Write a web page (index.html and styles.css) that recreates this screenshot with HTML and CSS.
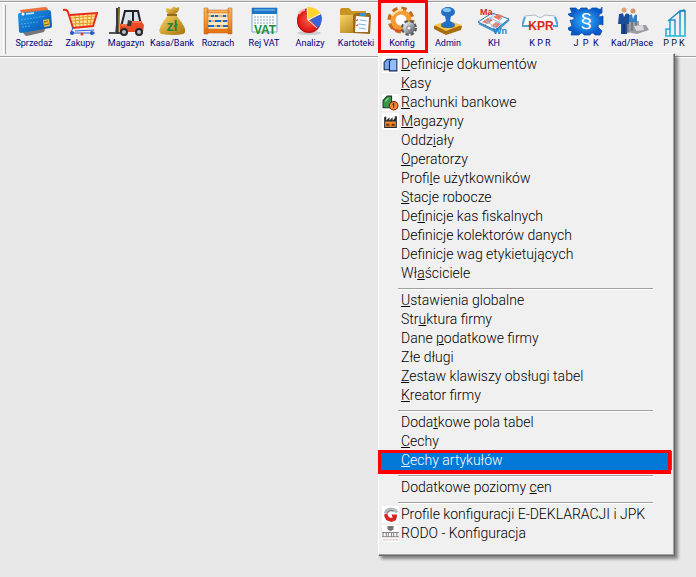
FILE: index.html
```html
<!DOCTYPE html>
<html lang="pl">
<head>
<meta charset="utf-8">
<title>Konfiguracja</title>
<link rel="stylesheet" href="styles.css">
</head>
<body>
<svg class="defs" aria-hidden="true">
  <defs>
    <linearGradient id="blue" x1="0" y1="0" x2="1" y2="1"><stop offset="0" stop-color="#1a9af0"/><stop offset="1" stop-color="#0a50a8"/></linearGradient>
    <linearGradient id="gold" x1="0" y1="0" x2="1" y2="1"><stop offset="0" stop-color="#f7d768"/><stop offset="1" stop-color="#a87008"/></linearGradient>
    <linearGradient id="orange" x1="0" y1="0" x2="0" y2="1"><stop offset="0" stop-color="#ffb95c"/><stop offset="1" stop-color="#e8700c"/></linearGradient>
    <linearGradient id="steel" x1="0" y1="0" x2="1" y2="1"><stop offset="0" stop-color="#e4e8ea"/><stop offset="1" stop-color="#626a70"/></linearGradient>
    <linearGradient id="cyan" x1="0" y1="0" x2="0" y2="1"><stop offset="0" stop-color="#1c7fc0"/><stop offset="1" stop-color="#22b5d8"/></linearGradient>
    <radialGradient id="red"><stop offset="0" stop-color="#ff6048"/><stop offset="1" stop-color="#d81010"/></radialGradient>
    <radialGradient id="jpk"><stop offset="0" stop-color="#39b4ff"/><stop offset="1" stop-color="#0758c8"/></radialGradient>
  </defs>
</svg>

<header class="toolbar">
  <span class="grip"></span>
  <nav class="tools" aria-label="Moduły">
    <button class="tool"><svg class="icon" viewBox="0 0 36 32">
      <path d="M4 4 29 1q2 0 3 2l3 12-26 5z" fill="#e8713a"/>
      <path d="M5 24 31 18 28 26 11 30q-2 0-3-2z" fill="#77777b"/>
      <path d="M2 9q0-2 2-2L32 4q3 0 3 2l1 14q0 2-2 2L5 27q-2 0-2-2z" fill="url(#blue)"/>
      <path d="M5 14 29 10M5 18 22 16M6 21 14 20" stroke="#70c7f5" fill="none" stroke-dasharray="2 1" stroke-width=".6"/>
      <circle cx="7" cy="8" r="1.5" fill="#fff"/><path d="M10 8 18 7" stroke="#c8ecff" stroke-width="1.5"/>
      <path d="m27 14 6-1 1 7-6 1z" fill="#e6bd36"/><path d="m28 16 4-1M28 19l5-1" stroke="#75662a"/>
    </svg><span class="caption">Sprzedaż</span></button>

    <button class="tool"><svg class="icon" viewBox="0 0 36 32">
      <path d="m8 9 26-2-4 13-20 1z" fill="#ffe39a"/>
      <path d="M9 12 33 10M10 15 32 13M10 18 31 17M13 9l1 12M17 9l1 12M21 8v12M26 8l-1 12M30 8l-2 12" stroke="#e49a20" fill="none"/>
      <path d="M1 4q4-1 5 2l5 16 20-2 4-13L8 9" stroke="#e82c16" stroke-width="2" fill="none"/>
      <path d="m11 21-2 6h24M13 25l19-1" stroke="#2c5ed8" fill="none"/>
      <circle cx="10" cy="27" r="2" fill="#2654cb"/><circle cx="20" cy="28" r="1.5" fill="#e53522"/><circle cx="30" cy="27" r="2" fill="#2654cb"/>
    </svg><span class="caption">Zakupy</span></button>

    <button class="tool"><svg class="icon" viewBox="0 0 36 32">
      <path d="M1 27h13M11 1 8 27" stroke="#555" fill="none" stroke-width="2"/>
      <path d="M8 2h4l-1 26H8z" fill="#35383d"/><path d="M11 2v24" stroke="#d89a24"/>
      <path d="m16 5h14l3 14H13z" fill="#d9e2e8"/><path d="m17 5-4 16M16 5h14l3 14M25 6v14" stroke="#202429" stroke-width="2" fill="none"/>
      <path d="M12 18h8l3-3h10l3 4-1 7H12z" fill="#e94b27"/><path d="M13 19h7l3-3h10" stroke="#ff997a" fill="none"/>
      <path d="m20 14 4 1-1 5h-4z" fill="#353535"/>
      <circle cx="16" cy="26" r="4" fill="#25272c"/><circle cx="31" cy="26" r="4" fill="#25272c"/>
      <circle cx="16" cy="26" r="2" fill="#b9bdc2"/><circle cx="31" cy="26" r="2" fill="#b9bdc2"/>
    </svg><span class="caption">Magazyn</span></button>

    <button class="tool"><svg class="icon" viewBox="0 0 36 32">
      <path d="M14 8Q10 3 13 2l4 1q3-4 5-1l3-1q1 4-4 7Z" fill="url(#gold)"/>
      <path d="M14 9h8l6 8q6 9 1 11-8 2-22 0-4-3 2-12z" fill="url(#gold)"/>
      <path d="M13 8h10v2H13z" fill="#8f6a17"/>
      <text x="18" y="25" class="zl">zł</text>
    </svg><span class="caption">Kasa/Bank</span></button>

    <button class="tool"><svg class="icon" viewBox="0 0 36 32">
      <path d="M6 6h24v20H6z" fill="#ffe6c4"/>
      <path d="M6 10h24M6 15h24M6 20h24" stroke="#b88350"/>
      <path d="M11 10h3m1 0h3m5 0h3M9 15h2m4 0h6m2 0h4M8 20h6m3 0h3m3 0h5" stroke="#176bc0" stroke-width="2"/>
      <path d="M4 2h4v26H4zM28 2h4v26h-4zM7 4h22v3H7zM6 23h24v4H6z" fill="url(#orange)" stroke="#b95e16" stroke-width=".5"/>
    </svg><span class="caption">Rozrach</span></button>

    <button class="tool"><svg class="icon" viewBox="0 0 36 32">
      <path d="M6 2h25v24H6z" fill="#f9fcff" stroke="#7ba6d0"/><path d="M6 2h25v6H6z" fill="#1b76c8"/><path d="M8 4h21" stroke="#88c7f3"/>
      <path d="M8 11h21M8 14h21M8 17h21" stroke="#8ca0b2" stroke-dasharray="2 1"/>
      <text x="19" y="28" class="vat">VAT</text>
    </svg><span class="caption">Rej VAT</span></button>

    <button class="tool"><svg class="icon" viewBox="0 0 36 32">
      <ellipse cx="17" cy="27" rx="12" ry="2" fill="#ccc"/>
      <circle cx="17" cy="15" r="12" fill="#ae1010"/><circle cx="17" cy="14" r="12" fill="url(#red)"/>
      <path d="M16 14 15 1q9-1 14 7z" fill="#ffd52d"/><path d="m18 14 11-6q3 7-3 14z" fill="#3765db"/>
      <path d="M16 14 15 2M16 14l12-6M16 14l9 8" stroke="#fff" fill="none"/>
      <path d="M7 8q2-4 6-4" stroke="#ffaaa0" fill="none" stroke-width="2"/>
    </svg><span class="caption">Analizy</span></button>

    <button class="tool"><svg class="icon" viewBox="0 0 36 32">
      <path d="M2 4q0-2 2-2h7l3 3h14v21H2z" fill="#c89426"/><path d="M2 9h25v18H2z" fill="url(#gold)"/>
      <path d="m15 9 3-2h14l1 3-1 18-17-1z" fill="#9c6a1e"/><path d="m18 10 13 1-1 15H17z" fill="#fff"/>
      <path d="M22 7h6v3h-6z" fill="#3d91cf"/><path d="m22 14 7 1M21 18l7 1M21 22l7 1" stroke="#75b5e1"/><path d="m18 14 1 1 1-2m-2 6 1 1 1-2" stroke="#e24848" fill="none"/>
    </svg><span class="caption">Kartoteki</span></button>

    <div class="konfig">
      <button class="tool framed" aria-expanded="true"><svg class="icon" viewBox="0 0 36 32">
        <circle cx="17" cy="14" r="11" fill="none" stroke="#c36b1b" stroke-width="5" stroke-dasharray="5 3.64"/>
        <circle cx="17" cy="14" r="8" fill="#fff" stroke="#f39b35" stroke-width="5"/>
        <path d="M8 10q4-6 11-6" stroke="#ffdc9f" stroke-width="2" fill="none"/>
        <path d="M8 22q5 4 11 2" stroke="#d8501d" stroke-width="2" fill="none"/>
        <circle cx="25" cy="22" r="6" fill="none" stroke="#545c60" stroke-width="4" stroke-dasharray="3 1.7"/>
        <circle cx="25" cy="22" r="4" fill="#f5f6f6" stroke="url(#steel)" stroke-width="4"/>
        <circle cx="25" cy="22" r="2" fill="#eef" stroke="#555" stroke-width=".6"/>
      </svg><span class="caption">Konfig</span></button>

      <div class="menu" role="menu">
        <button class="entry" role="menuitem"><svg class="mark" viewBox="0 0 16 16"><path fill="#fff" d="M0 0h16v16H0z"/><path d="M2 6 5 3h4v10H2z" fill="#79a9f5" stroke="#102548"/><path d="m7 5 2-2h5v11H7z" fill="#8fbdff" stroke="#102548"/></svg><span><u>D</u>efinicje dokumentów</span></button>
        <button class="entry" role="menuitem"><span><u>K</u>asy</span></button>
        <button class="entry" role="menuitem"><svg class="mark" viewBox="0 0 16 16"><path fill="#fff" d="M0 0h16v16H0z"/><path d="m1 6 4-4h4v11H1z" fill="#37964a" stroke="#143d1d"/><path d="M3 7 6 4" stroke="#9bd6a3"/><circle cx="11" cy="11" r="4" fill="#f48b32" stroke="#6b2808"/><path d="m10 10 1-1v4" stroke="#552000" fill="none"/></svg><span><u>R</u>achunki bankowe</span></button>
        <button class="entry" role="menuitem"><svg class="mark" viewBox="0 0 16 16"><path fill="#fff" d="M0 0h16v16H0z"/><path d="M2 14V4l2-1v4l3-3v3l3-3v3l2-2V3h2v11z" fill="#292b2e"/><path d="M3 8h10v5H3z" fill="#f58b2c"/><path d="M4 10h3v2H4zm5 0h3v2H9z" fill="#6b2f11"/></svg><span><u>M</u>agazyny</span></button>
        <button class="entry" role="menuitem"><span>Oddz<u>i</u>ały</span></button>
        <button class="entry" role="menuitem"><span><u>O</u>peratorzy</span></button>
        <button class="entry" role="menuitem"><span>Profi<u>l</u>e użytkowników</span></button>
        <button class="entry" role="menuitem"><span><u>S</u>tacje robocze</span></button>
        <button class="entry" role="menuitem"><span>De<u>f</u>inicje kas fiskalnych</span></button>
        <button class="entry" role="menuitem"><span>Definicje kolektorów danych</span></button>
        <button class="entry" role="menuitem"><span>Definicje wag etykietujących</span></button>
        <button class="entry" role="menuitem"><span>Wł<u>a</u>ściciele</span></button>
        <hr class="rule">
        <button class="entry" role="menuitem"><span><u>U</u>stawienia globalne</span></button>
        <button class="entry" role="menuitem"><span>Str<u>u</u>ktura firmy</span></button>
        <button class="entry" role="menuitem"><span>Dane <u>p</u>odatkowe firmy</span></button>
        <button class="entry" role="menuitem"><span>Złe długi</span></button>
        <button class="entry" role="menuitem"><span><u>Z</u>estaw klawiszy obsługi tabel</span></button>
        <button class="entry" role="menuitem"><span><u>K</u>reator firmy</span></button>
        <hr class="rule">
        <button class="entry" role="menuitem"><span>Doda<u>t</u>kowe pola tabel</span></button>
        <button class="entry" role="menuitem"><span><u>C</u>echy</span></button>
        <button class="entry selected" role="menuitem"><span><u>C</u>echy artykułów</span></button>
        <hr class="rule">
        <button class="entry" role="menuitem"><span>Dodatkowe poziomy <u>c</u>en</span></button>
        <hr class="rule">
        <button class="entry" role="menuitem"><svg class="mark" viewBox="0 0 16 16"><path fill="#fff" d="M0 0h16v16H0z"/><path d="M14 6A6 6 0 0 0 3 7" stroke="#b5b8ba" stroke-width="3" fill="none"/><path d="M2 8q0 6 7 7 6-1 5-7H9l1 3q-4 1-5-4z" fill="#d62525"/><path d="M11 5q-4-2-6 2" stroke="#777" fill="none"/></svg><span>Profile konfiguracji E-DEKLARACJI i JPK</span></button>
        <button class="entry" role="menuitem"><svg class="mark" viewBox="0 0 16 16"><path fill="#fff" d="M0 0h16v16H0z"/><path d="M5 1h6v3l-3 2-3-2z" fill="#8b8585"/><path d="M6 2h4M6 4h4" stroke="#666"/><path d="M0 7h16M0 11h16M1 7v4M4 7v4M6 7v4M9 7v4M11 7v4M14 7v4" stroke="#8b8586" fill="none"/><path d="M1 14h14" stroke="#d0b8b8" stroke-dasharray="2 1"/></svg><span>RODO - Konfiguracja</span></button>
      </div>
    </div>

    <button class="tool"><svg class="icon" viewBox="0 0 36 32">
      <path d="m4 20 15-5 13 5-1 4-15 5-12-6z" fill="#a86c0c"/><path d="m4 19 15-4 13 4-16 6z" fill="#f4c64b"/>
      <ellipse cx="18" cy="20" rx="7" ry="2" fill="#8b5c16"/><path d="M15 10h6l-1 5 5 3q-1 4-7 4-6 0-7-4l5-3z" fill="#1f71c7"/>
      <ellipse cx="18" cy="6" rx="7" ry="5" fill="#246fc0"/><ellipse cx="17" cy="4" rx="4" ry="2" fill="#85c6f3"/>
    </svg><span class="caption">Admin</span></button>

    <button class="tool"><svg class="icon" viewBox="0 0 36 32">
      <path d="m2 18 15-9 17 5-14 13z" fill="#4995c7"/><path d="m2 16 14-9 17 6-14 11z" fill="#f3f8fc" stroke="#3178ab"/>
      <path d="m6 16 6-4 5 2-5 4zM17 11l5-3 5 2-4 4zM15 20l5-4 5 2-5 4z" fill="#ea7766"/><path d="m9 14 11 8M13 11l13 7M18 8 9 19M26 12l-9 10" stroke="#8fc3e0"/>
      <text x="4" y="9" class="ledger debit">Ma</text><text x="17" y="28" class="ledger credit">Wn</text>
    </svg><span class="caption">KH</span></button>

    <button class="tool"><svg class="icon" viewBox="0 0 36 32">
      <path d="m3 10 10-1 5 3 5-3 10 1 3 10q-9-2-18 1Q9 18 0 20z" fill="#f8fbfd" stroke="#a9bac5"/>
      <path d="m3 11-3 9h8M33 11l3 9h-5" stroke="#4ca2d6" stroke-width="2" fill="none"/>
      <text x="19" y="24" class="kpr">KPR</text>
    </svg><span class="caption">K P R</span></button>

    <button class="tool"><svg class="icon" viewBox="0 0 36 32">
      <path d="M2 2h6q2 4 5 0h6q1 4 5 0h5q4 3 5-1v6q-4 1-3 4l4-1v9q-5-2-5 2l4 4-2 4h-5q-3-4-5 0h-6q-2-4-5 0H3l1-4q-4 0-4-3l4-2-2-6q4 1 4-3-5 0-6-3l4-1z" fill="url(#jpk)" stroke="#0b469b" stroke-width=".7"/>
      <text x="18" y="22" class="section">§</text>
    </svg><span class="caption">J&nbsp; P&nbsp; K</span></button>

    <button class="tool"><svg class="icon" viewBox="0 0 36 32">
      <path d="M12 16h5v-6h4v5h4v4h7l3 5-12 4-10-2z" fill="#9a9ea1"/><path d="M14 12v15M18 10v15M22 14v11" stroke="#555d62"/>
      <circle cx="10" cy="4" r="2.5" fill="#e2a06f"/><path d="m5 8 5-1 5 1v10h-2v10H7V18H4z" fill="#1c4d99"/><path d="m9 7 1 4 2-4" fill="#fff"/><path d="M10 18v10" stroke="#12294c"/>
      <circle cx="19" cy="5" r="2.5" fill="#d79465"/><path d="m15 9 4-1 4 1v7h-8z" fill="#377fc5"/><path d="m18 8 1 5 2-5" fill="#fff"/>
      <path d="m20 20 9-1 1 5-8 1z" fill="#d8dadc"/>
    </svg><span class="caption">Kad/Płace</span></button>

    <button class="tool last"><svg class="icon" viewBox="0 0 36 32">
      <path d="M9 30h20V5h-5v25M19 30V14h-5v16M10 30v-7h4M12 15l6-5 6-5 5-1" fill="none" stroke="url(#cyan)" stroke-width="1.5"/>
    </svg><span class="caption">P P K</span></button>
  </nav>
</header>
<main class="workspace"></main>
</body>
</html>
```
FILE: styles.css
```css
* { box-sizing: border-box; }

body {
  margin: 0;
  min-height: 100vh;
  display: flex;
  flex-direction: column;
  background: #e8e8e8;
  font-family: Roboto, "Liberation Sans", Arial, sans-serif;
  overflow: hidden;
}

.defs { position: absolute; width: 0; height: 0; }

button {
  border: 0;
  margin: 0;
  padding: 0;
  background: none;
  color: inherit;
  font: inherit;
}

.toolbar {
  display: flex;
  height: 58px;
  background: #f0f0f0;
  border-top: 1px solid #e3e3e3;
  border-bottom: 1px solid #fff;
  box-shadow: inset 0 1px #a0a0a0, inset 0 2px #fff, inset 0 -1px #a0a0a0;
}

.grip {
  flex: none;
  width: 3px;
  margin: 4px 5px 3px 3px;
  background: #f0f0f0;
  border-left: 1px solid #fff;
  border-right: 1px solid #a0a0a0;
}

.tools { display: flex; flex: 1; }

.tool {
  flex: none;
  display: flex;
  flex-direction: column;
  align-items: center;
  width: 46px;
  height: 52px;
  padding-top: 5px;
  color: #000080;
}

.last { width: 38px; color: #101018; }

.icon { flex: none; display: block; width: 36px; height: 32px; }

.caption {
  font-size: 9px;
  line-height: 10px;
  white-space: nowrap;
}

.konfig { position: relative; z-index: 1; }

.framed { position: relative; }

.framed::after {
  content: "";
  position: absolute;
  inset: -1px -3px 0 -1px;
  border: 3px solid #f00;
}

.icon text { font-family: "Liberation Sans", Arial, sans-serif; font-weight: bold; }
.zl { font-size: 14px; fill: #28843c; text-anchor: middle; }
.vat { font-size: 12px; fill: #16913a; text-anchor: middle; }
.ledger { font-size: 9px; }
.debit { fill: #d82323; }
.credit { fill: #1685cc; }
.kpr { font-size: 12px; fill: #e02618; text-anchor: middle; }
.icon .section { font-size: 21px; font-weight: normal; fill: #fff; text-anchor: middle; }

.menu {
  position: absolute;
  top: 52px;
  left: -1px;
  width: 297px;
  padding: 1px 2px 12px;
  background: #f0f0f0;
  border: 1px solid;
  border-color: #fff #696969 #696969 #fff;
  box-shadow: inset -1px -1px #a0a0a0, 3px 3px 3px #00000070;
  color: #000;
}

.entry {
  position: relative;
  display: flex;
  align-items: center;
  width: 100%;
  height: 19px;
  padding-left: 20px;
  font-size: 14px;
  font-weight: 300;
  line-height: 19px;
  text-align: left;
  white-space: nowrap;
}

.mark {
  position: absolute;
  left: 1px;
  width: 17px;
  height: 17px;
}

.rule {
  height: 2px;
  margin: 5px 19px 1px 17px;
  border: 0;
  border-top: 1px solid #a0a0a0;
  border-bottom: 1px solid #fff;
}

.selected { background: #0078d7; color: #fff; }

.selected::after {
  content: "";
  position: absolute;
  inset: -1px 1px -4px -3px;
  border: solid #f00;
  border-width: 3px 3px 4px;
}

.workspace { flex: 1; }
```
